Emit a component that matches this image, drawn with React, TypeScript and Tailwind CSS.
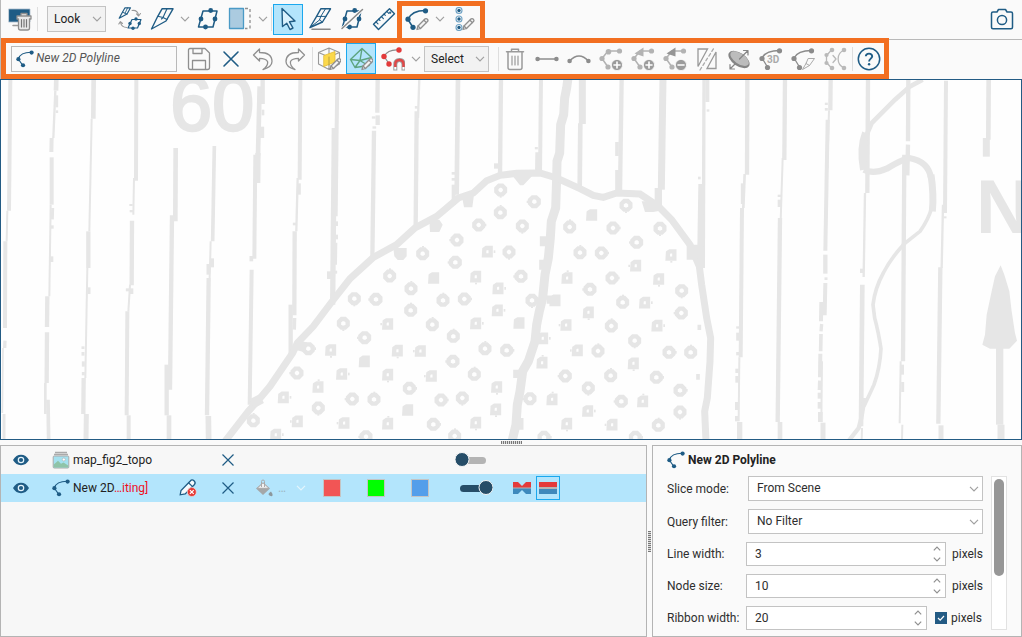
import React from 'react';

type Kids = { children?: React.ReactNode };

const BLUE = '#1f5c85';
const GREY = '#9a9a9a';

function Icon({ children, color = BLUE, size = 24 }: Kids & { color?: string; size?: number }) {
  return (
    <svg width={size} height={size} viewBox="0 0 24 24" fill="none" stroke={color} strokeWidth="1.3" strokeLinejoin="round" strokeLinecap="round" className="shrink-0" aria-hidden="true">
      {children}
    </svg>
  );
}

function Tool({ label, active, children }: Kids & { label: string; active?: boolean }) {
  return (
    <button
      type="button"
      aria-label={label}
      aria-pressed={active}
      className={
        active
          ? 'flex h-[31px] w-[30px] shrink-0 items-center justify-center border border-[#1ba8ee] bg-[#b3e5fc]'
          : 'flex h-[30px] w-[30px] shrink-0 items-center justify-center'
      }
    >
      {children}
    </button>
  );
}

function Chevron({ color = '#a0a0a0' }: { color?: string }) {
  return (
    <svg width="10" height="6" viewBox="0 0 10 6" fill="none" stroke={color} strokeWidth="1.2" aria-hidden="true">
      <path d="M1 .8 5 4.8 9 .8" />
    </svg>
  );
}

function MoreButton({ label }: { label: string }) {
  return (
    <button type="button" aria-label={label} className="flex h-[30px] w-4 shrink-0 items-center justify-center">
      <Chevron />
    </button>
  );
}

function Separator() {
  return <div className="h-6 w-px shrink-0 bg-[#dedede]" />;
}

function Dropdown({ label, value, options, className }: { label: string; value: string; options: string[]; className: string }) {
  return (
    <div className={`relative shrink-0 ${className}`}>
      <select aria-label={label} defaultValue={value} className="h-[26px] w-full appearance-none border border-[#c3c3c3] bg-[#f2f2f2] pl-1.5 text-xs text-[#222]">
        {options.map((o) => (
          <option key={o}>{o}</option>
        ))}
      </select>
      <span className="pointer-events-none absolute inset-y-0 right-1 flex items-center">
        <Chevron />
      </span>
    </div>
  );
}

/* ---------- icon drawings ---------- */

function Pencil({ x = 0, y = 0 }: { x?: number; y?: number }) {
  return (
    <g transform={`translate(${x} ${y})`} stroke="#8f8f8f" strokeWidth="1.3">
      <path d="M1 11.5 2 8 9.2.8Q10.4.2 11.4 1.2T11.7 3.3L4.5 10.5Z" fill="#f4f4f4" />
      <path d="M8 2.2 10.4 4.6M2 8 4.5 10.5" />
    </g>
  );
}

function PolylineShape({ color = BLUE }: { color?: string }) {
  return (
    <g stroke={color}>
      <path d="M20.5 3.5C12 3.5 5.5 6 3 12.5L8 20.5" strokeWidth="1.5" />
      <g fill={color} stroke="none">
        <circle cx="20.5" cy="3.8" r="2.6" />
        <circle cx="3" cy="12.2" r="2.6" />
        <circle cx="8" cy="20.3" r="2.6" />
      </g>
    </g>
  );
}

const PolylineIcon = ({ size = 18 }: { size?: number }) => (
  <Icon size={size}>
    <path d="M20 3C11 3 5 6 3 12L9 20.5" strokeWidth="1.5" />
    <g fill={BLUE} stroke="none">
      <circle cx="20.8" cy="3.4" r="2.8" />
      <circle cx="3.2" cy="12.2" r="2.8" />
      <circle cx="9.4" cy="20.3" r="2.8" />
    </g>
  </Icon>
);

function Plane() {
  return (
    <g>
      <path d="M12 1.8H23L16 14 1.5 22 7.5 9.8Z" strokeWidth="1.4" />
      <path d="M7.8 9.2 13 10.5 17 12.5M17 1.8 13 10.5 11.5 12" strokeWidth="1.1" />
    </g>
  );
}

function NodePlane() {
  return (
    <g>
      <path d="M7 4H21L17 20H2.5Z" strokeWidth="1.5" />
      <g fill={BLUE} stroke="none">
        <circle cx="14.7" cy="3.5" r="2.4" />
        <circle cx="19" cy="12" r="2.4" />
        <circle cx="9.5" cy="20" r="2.4" />
        <circle cx="5" cy="12" r="2.4" />
      </g>
    </g>
  );
}

function HideViewIcon() {
  return (
    <Icon>
      <rect x="1" y="2" width="21" height="13" fill={BLUE} stroke="#abc" strokeWidth=".8" />
      <path d="M5 18.5H10" strokeWidth="1.5" stroke="#999" />
      <path d="M9 9H23V12H21.5V21Q21.5 23 19.5 23H12.5Q10.5 23 10.5 21V12H9ZM13 9V6.5H19V9" fill="#e9e9e9" stroke="#8f8f8f" />
      <path d="M13.5 12.5V20M16 12.5V20M18.5 12.5V20" stroke="#777" strokeWidth="1.2" />
    </Icon>
  );
}

function ConvertIcon() {
  return (
    <Icon>
      <g strokeWidth="1.2">
        <path d="M7 .8H12.5L9 7 1.2 11.2 4.3 5.5Z" />
        <path d="M4.5 5.2 9 7M9.6.8 7 6.2" strokeWidth=".9" />
        <path d="M14 12.5H23L19.5 21H10Z" />
      </g>
      <path d="M14 3.5C17.5 3 20 5 20.6 8.5M18.5 6.8 20.6 9 22.5 6.5M9 20.5C5 20.5 3 18.5 2.4 15M.8 17 2.4 14.6 4.5 16.5" stroke="#999" strokeWidth="1.1" />
      <g fill={BLUE} stroke="none">
        <circle cx="18" cy="12" r="1.7" />
        <circle cx="21.3" cy="16.5" r="1.7" />
        <circle cx="15" cy="21.2" r="1.7" />
        <circle cx="12" cy="16.5" r="1.7" />
      </g>
    </Icon>
  );
}

function TrashIcon() {
  return (
    <Icon color={GREY}>
      <path d="M3.5 4.8H20.5M8.5 4.5V2.2H15.5V4.5M5 5.2V20.5Q5 22.5 7 22.5H17Q19 22.5 19 20.5V5.2" strokeWidth="1.5" />
      <path d="M9 9V18M12 9V18M15 9V18" strokeWidth="1.2" />
    </Icon>
  );
}

function NodeChain({ badge, arrow }: { badge: '+' | '-'; arrow?: boolean }) {
  return (
    <Icon color="#b3b3b3">
      <path d="M20 4H9L3 11.5 9 20" strokeWidth="1.5" />
      <g fill="#b3b3b3" stroke="none">
        <circle cx="20.5" cy="4" r="2.6" />
        <circle cx="3" cy="11.5" r="2.6" />
        <circle cx="9" cy="20" r="2.6" />
        {arrow ? <path d="M3.5 6.5 12.5.5V9.5Z" fill={badge === '-' ? '#959595' : '#b3b3b3'} /> : <circle cx="9.5" cy="4.8" r="2.8" />}
      </g>
      <circle cx="18" cy="18" r="5.6" fill="#9b9b9b" stroke="#fafafa" strokeWidth=".8" />
      <path d={badge === '+' ? 'M15 18H21M18 15V21' : 'M15 18H21'} stroke="#fff" strokeWidth="1.6" />
    </Icon>
  );
}

/* ---------- toolbars ---------- */

function MainToolbar() {
  return (
    <header className="flex h-[38px] items-center border-l border-[#b9b9b9] pr-[5px]">
      <div className="flex h-full items-center pl-1">
        <Tool label="Clear view"><HideViewIcon /></Tool>
        <div className="ml-[2px] mr-[9px]"><Separator /></div>
        <Dropdown label="Look" value="Look" options={['Look', 'Front', 'Top']} className="mr-[9px] w-[59px]" />
        <Tool label="Convert plane"><ConvertIcon /></Tool>
        <div className="w-0.5" />
        <Tool label="Draw slicer line"><Icon><Plane /></Icon></Tool>
        <MoreButton label="Slicer options" />
        <Tool label="Moving plane"><Icon><NodePlane /></Icon></Tool>
        <div className="w-0.5" />
        <Tool label="Clip scene">
          <Icon>
            <rect x="1.5" y="1.5" width="14" height="20" fill="#abcbe0" stroke="#4b9ac6" />
            <path d="M17 1.5H22V21.5H17" stroke="#8f8f8f" strokeDasharray="3 2.5" strokeLinecap="butt" />
          </Icon>
        </Tool>
        <MoreButton label="Clip options" />
        <Separator />
        <div className="ml-px flex items-center gap-0.5">
          <Tool label="Select" active>
            <Icon>
              <path d="M6 1.5 19 14 13.5 14.8 17 21 14 22.5 10.8 16.2 6.5 19.5Z" strokeWidth="1.4" fill="#d9f1fc" />
            </Icon>
          </Tool>
          <Tool label="Draw slice">
            <Icon>
              <path d="M12.8 1.8H22.5L14.5 15 2 20.5 8.3 9.8Z" strokeWidth="1.4" />
              <path d="M8.6 9.4H18M12.8 9.4 11.5 13 14.5 15M17.5 1.8 12.8 9.4M11.5 13 2 20.5" strokeWidth="1" />
              <path d="M4 22.3H22" stroke="#888" strokeWidth="1.6" />
            </Icon>
          </Tool>
          <Tool label="Remove plane">
            <Icon>
              <NodePlane />
              <path d="M2 22 23 2" stroke="#fafafa" strokeWidth="3.5" />
              <path d="M2 21.5 22.5 2.5" stroke="#888" strokeWidth="1.5" />
            </Icon>
          </Tool>
          <Tool label="Ruler">
            <Icon>
              <path d="M17.5 1.8 22.5 6.8 6.5 22.5 1.5 17.2Z" strokeWidth="1.4" />
              <path d="M4 14.8 6 16.8M6.7 12.2 8 13.5M9.4 9.6 11.4 11.6M12 7 13.3 8.3M14.8 4.3 16.8 6.3" strokeWidth="1.1" />
              <circle cx="18.2" cy="5.7" r=".5" />
            </Icon>
          </Tool>
        </div>
      </div>
      <div className="-ml-0.5 mt-px flex h-[37px] w-[88px] shrink-0 items-center justify-between self-start border-x-[5px] border-t-[5px] border-[#f26f21] pb-1.5">
        <div className="flex items-center">
          <Tool label="New polyline"><Icon><PolylineShape /><Pencil x={11} y={11} /></Icon></Tool>
          <MoreButton label="Polyline options" />
        </div>
        <Tool label="New points">
          <Icon>
            {[3.5, 12, 20.5].map((y) => (
              <g key={y}>
                <circle cx="6" cy={y} r="3" stroke="#6fa3c5" strokeWidth="1.1" />
                <circle cx="6" cy={y} r="1.7" fill={BLUE} stroke="none" />
              </g>
            ))}
            <Pencil x={9} y={11} />
          </Icon>
        </Tool>
      </div>
      <div className="ml-auto">
        <Tool label="Take snapshot">
          <Icon>
            <path d="M3 5H7L8.5 2.5H15.5L17 5H21Q22.5 5 22.5 6.5V20.2Q22.5 21.7 21 21.7H3Q1.5 21.7 1.5 20.2V6.5Q1.5 5 3 5Z" strokeWidth="1.5" />
            <circle cx="12" cy="13" r="4.6" strokeWidth="1.5" />
          </Icon>
        </Tool>
      </div>
    </header>
  );
}

function EditToolbar() {
  return (
    <div className="flex h-[41px] border-l border-[#b9b9b9]">
      <div className="flex shrink-0 items-center border-[5px] border-[#f26f21] pl-[5px]">
        <label className="mr-[7px] flex h-[26px] w-[166px] items-center gap-0.5 border border-[#b9b9b9] pl-1">
          <PolylineIcon />
          <input aria-label="Name" defaultValue="New 2D Polyline" className="w-full min-w-0 bg-transparent pb-0.5 text-xs italic text-[#555] outline-none" />
        </label>
        <div className="flex items-center gap-0.5">
          <Tool label="Save">
            <Icon color="#8f8f8f">
              <path d="M3 1.5H18L22.5 6V20.5Q22.5 22.5 20.5 22.5H3.5Q1.5 22.5 1.5 20.5V3Q1.5 1.5 3 1.5Z" />
              <path d="M6 1.8V6.5H15V1.8M5.5 22.3V13.5H18.5V22.3" />
            </Icon>
          </Tool>
          <Tool label="Close"><Icon><path d="M5 5 19 19M19 5 5 19" strokeWidth="1.6" /></Icon></Tool>
          <Tool label="Undo">
            <Icon color="#8f8f8f"><path d="M2.5 8 8.5 2V5.5C17 5.5 21 9 21 14.5Q21 20 12 22.5Q17.5 18.5 16.5 14.5Q15 11.3 8.5 11.3V14Z" /></Icon>
          </Tool>
          <Tool label="Redo">
            <Icon color="#8f8f8f"><path d="M21.5 8 15.5 2V5.5C7 5.5 3 9 3 14.5Q3 20 12 22.5Q6.5 18.5 7.5 14.5Q9 11.3 15.5 11.3V14Z" /></Icon>
          </Tool>
        </div>
        <div className="ml-0.5 mr-px"><Separator /></div>
        <Tool label="Draw on scene">
          <Icon color="#999">
            <path d="M12 1 22.5 5.5V17L12 22.5 1.5 17V5.5ZM1.5 5.5 12 10 22.5 5.5M12 10V22.5M12 1V10" strokeWidth="1.1" />
            <path d="M7 8.5 18 4.5V15L7 19.5Z" fill="#fbd84b" stroke="#e3bb35" strokeWidth=".8" />
            <path d="M12 10V18" stroke="#b79f3f" strokeWidth="1" />
            <Pencil x={12} y={11} />
          </Icon>
        </Tool>
        <div className="w-0.5" />
        <Tool label="Draw on plane" active>
          <Icon color="#5da47f">
            <path d="M13 1.5 22.5 10.5 20 18.5 6 20.5 1.5 12.5ZM13 1.5 11 13.5 1.5 12.5M11 13.5 22.5 10.5M11 13.5 6 20.5M11 13.5 19 18.5" strokeWidth="1.4" />
            <Pencil x={12} y={11} />
          </Icon>
        </Tool>
        <div className="w-0.5" />
        <Tool label="Snap">
          <Icon color="#8a8a8a">
            <path d="M18 3C12 2.5 6 4 3 9.5L8 16.5" strokeWidth="1.2" />
            <g fill="#e33a3a" stroke="none">
              <circle cx="18" cy="3" r="2.7" />
              <circle cx="3" cy="9.5" r="2.7" />
              <circle cx="8" cy="17" r="2.7" />
            </g>
            <path d="M14.3 23.5V17.5Q14.3 13 18.4 13T22.5 17.5V23.5" stroke="#9d9d9d" strokeWidth="4" strokeLinecap="butt" />
            <path d="M14.3 20V17.5Q14.3 13 18.4 13T22.5 17.5V20" stroke="#e04848" strokeWidth="2.4" strokeLinecap="butt" />
            <path d="M14.3 20V22.5M22.5 20V22.5" stroke="#fff" strokeWidth="2" strokeLinecap="butt" />
          </Icon>
        </Tool>
        <MoreButton label="Snap options" />
        <Dropdown label="Snap mode" value="Select" options={['Select', 'Draw']} className="w-[65px]" />
        <div className="ml-[9px] mr-px"><Separator /></div>
        <div className="flex items-center gap-0.5">
          <Tool label="Delete"><TrashIcon /></Tool>
          <Tool label="Straight segment">
            <Icon color="#8d8d8d">
              <path d="M2.5 12H21.5" strokeWidth="1.6" />
              <g fill="#8d8d8d" stroke="none"><circle cx="2.6" cy="12" r="2.3" /><circle cx="21.4" cy="12" r="2.3" /></g>
            </Icon>
          </Tool>
          <Tool label="Curved segment">
            <Icon color="#8d8d8d">
              <path d="M2.5 14Q12 4 21.5 14" strokeWidth="1.6" />
              <g fill="#8d8d8d" stroke="none"><circle cx="2.6" cy="14" r="2.3" /><circle cx="21.4" cy="14" r="2.3" /></g>
            </Icon>
          </Tool>
          <Tool label="Add node"><NodeChain badge="+" /></Tool>
          <Tool label="Extend"><NodeChain badge="+" arrow /></Tool>
          <Tool label="Remove node"><NodeChain badge="-" arrow /></Tool>
          <Tool label="Mirror">
            <Icon color="#999">
              <path d="M3 2H12.5L3 19.5ZM12 21.5 21 5V21.5Z" strokeLinejoin="miter" />
              <path d="M5 23 19 1" strokeDasharray="3 2.5" stroke="#aaa" />
            </Icon>
          </Tool>
          <Tool label="Fit disk">
            <Icon color="#858585">
              <ellipse cx="12" cy="12.5" rx="12" ry="6.6" transform="rotate(34 12 12.5)" fill="#858585" stroke="none" />
              <ellipse cx="12.6" cy="11.6" rx="10.5" ry="5.2" transform="rotate(34 12.6 11.6)" fill="#bcbcbc" stroke="none" />
              <path d="M12.5 12 20.5 4M16.5 3.5H21V8M7.5 17.5 3.5 21.5M3 17.5V22H7.5" strokeWidth="1.2" />
            </Icon>
          </Tool>
          <Tool label="Convert to 3D">
            <Icon color="#8b8b8b">
              <path d="M20.5 3.5C12 3.5 5.5 6 3 11L8.5 20" />
              <g fill="#8b8b8b" stroke="none"><circle cx="20.5" cy="3.8" r="2.6" /><circle cx="3" cy="11.5" r="2.6" /><circle cx="8.5" cy="20.5" r="2.6" /></g>
              <text x="8" y="16" fill="#aaa" stroke="none" fontFamily="Roboto, sans-serif" fontWeight="700" fontSize="10">3D</text>
            </Icon>
          </Tool>
          <Tool label="Slice from polyline">
            <Icon color="#8b8b8b">
              <path d="M20.5 3.5C12 3.5 5.5 6 3 11L8.5 20" />
              <g fill="#8b8b8b" stroke="none"><circle cx="20.5" cy="3.8" r="2.6" /><circle cx="3" cy="11.5" r="2.6" /><circle cx="8.5" cy="20.5" r="2.6" /></g>
              <path d="M17.5 11.5H23.5L18.5 18.5 11.5 22.5 15 16.5ZM15 16.5 18.5 18.5" strokeWidth="1" stroke="#aaa" />
            </Icon>
          </Tool>
          <Tool label="Join">
            <Icon color="#b9b9b9">
              <path d="M8.5 3 3.5 8.5V15.5L8.5 21M21.5 3C13 6 13 18 21.5 21M10 8.5 13 12 10 15.5" />
              <g fill="#b9b9b9" stroke="none"><circle cx="9" cy="3" r="2.3" /><circle cx="3.5" cy="8" r="2.1" /><circle cx="3.5" cy="16" r="2.1" /><circle cx="9" cy="21" r="2.3" /><circle cx="21" cy="3" r="2.3" /><circle cx="21" cy="21" r="2.3" /></g>
            </Icon>
          </Tool>
        </div>
        <div className="ml-0.5 mr-px"><Separator /></div>
        <Tool label="Help">
          <Icon>
            <circle cx="12" cy="12" r="10.7" strokeWidth="1.5" />
            <path d="M8.8 9.3Q9 6.6 12 6.6T15.2 9.3C15.2 11.5 12.1 11.8 12.1 14.4" strokeWidth="1.9" strokeLinecap="butt" />
            <circle cx="12.1" cy="17.2" r="1.2" fill={BLUE} stroke="none" />
          </Icon>
        </Tool>
      </div>
      <div className="mt-px flex-1 border-t border-[#b9b9b9]" />
    </div>
  );
}

/* ---------- map ---------- */

/* Contour strokes: x1, y1, x2, y2, width */
type Seg = [number, number, number, number, number];

const WEST: Seg[] = [
  [31, 0, 27, 398, 12], [22, 398, 20, 490, 6], [16, 490, 15, 750, 12], [15, 788, 14, 810, 10], [9, 810, 7, 1005, 5], [12, 1008, 12, 1090, 9],
  [169, 0, 168, 38, 14], [166, 38, 160, 180, 7], [171, 52, 171, 88, 7], [171, 97, 171, 105, 7], [155, 180, 154, 222, 12], [155, 238, 155, 380, 12], [152, 380, 148, 655, 6], [158, 390, 157, 424, 9], [157, 442, 157, 452, 8], [155, 535, 155, 552, 10], [142, 655, 141, 747, 13], [141, 763, 140, 915, 13], [136, 915, 136, 1008, 8], [144, 965, 146, 1090, 11],
  [281, 0, 280, 122, 14], [275, 122, 268, 460, 6], [265, 460, 265, 570, 13], [262, 570, 256, 900, 6], [267, 628, 267, 648, 9], [249, 805, 249, 813, 9], [249, 822, 249, 833, 9], [250, 850, 250, 866, 9], [250, 882, 250, 892, 9], [251, 900, 250, 1008, 13], [259, 1008, 258, 1090, 15],
  [409, 0, 408, 308, 12], [402, 300, 400, 410, 6], [393, 378, 393, 384, 10], [394, 396, 394, 403, 10], [396, 428, 395, 622, 13], [390, 620, 385, 700, 6], [383, 631, 383, 640, 11], [395, 631, 395, 648, 10], [382, 700, 380, 1012, 12], [386, 1012, 386, 1090, 12],
  [527, 210, 526, 430, 14], [516, 412, 510, 935, 13], [500, 860, 500, 1012, 13], [507, 1012, 507, 1090, 14],
  [643, 204, 638, 490, 11], [632, 490, 629, 600, 6], [637, 541, 637, 568, 10], [625, 558, 625, 590, 11], [626, 600, 621, 1012, 13], [625, 1014, 626, 1090, 17],
  [788, 0, 788, 78, 13], [779, 25, 774, 232, 14], [789, 95, 789, 112, 8], [786, 146, 786, 180, 13], [774, 225, 773, 315, 16], [766, 230, 763, 542, 12], [754, 534, 754, 550, 11], [755, 575, 749, 980, 12],
  [901, 0, 899, 305, 12], [898, 316, 898, 350, 9], [893, 300, 889, 460, 7], [884, 434, 884, 442, 11], [884, 460, 883, 712, 13], [872, 680, 872, 830, 13], [884, 720, 883, 755, 10],
  [1012, 0, 1010, 150, 12], [1003, 150, 998, 680, 16], [1009, 150, 1006, 415, 14], [1008, 430, 1008, 444, 12], [1008, 470, 1008, 484, 12], [1006, 494, 1005, 560, 12], [987, 580, 987, 603, 12], [1007, 578, 1007, 587, 9],
];

const CENTRE: Seg[] = [
  [143, 0, 142, 104, 13], [143, 112, 143, 141, 13], [131, 115, 131, 122, 11], [133, 145, 133, 152, 11], [132, 158, 127, 545, 13], [268, 0, 264, 120, 7], [259, 84, 259, 92, 9], [260, 100, 257, 445, 13],
  [384, 0, 380, 350, 14], [370, 282, 370, 290, 10], [370, 300, 370, 308, 10], [371, 320, 371, 380, 12], [513, 0, 510, 300, 13], [498, 256, 498, 272, 12],
  [633, 0, 630, 290, 12], [619, 207, 619, 214, 9], [622, 223, 621, 290, 12], [757, 0, 757, 138, 21], [751, 136, 749, 335, 14],
  [875, 0, 870, 345, 13], [861, 192, 861, 234, 11], [862, 276, 862, 345, 13], [999, 0, 994, 335, 21], [985, 330, 985, 390, 22],
];

const EAST: Seg[] = [
  [112, 0, 112, 72, 12], [102, 0, 100, 570, 10], [114, 94, 114, 101, 8], [88, 296, 88, 304, 8], [94, 318, 90, 572, 18],
  [232, 0, 231, 290, 13], [224, 288, 220, 390, 8], [217, 316, 217, 378, 9], [216, 390, 212, 838, 12], [203, 745, 203, 752, 9], [203, 764, 203, 788, 9], [203, 822, 203, 832, 9], [208, 838, 206, 1030, 6], [201, 872, 201, 885, 10], [201, 894, 201, 914, 10], [200, 972, 200, 996, 10], [200, 1014, 200, 1030, 10], [209, 1032, 209, 1090, 16],
  [345, 0, 343, 246, 13], [338, 240, 332, 430, 6], [328, 350, 328, 357, 10], [328, 365, 328, 387, 10], [330, 420, 323, 1032, 13], [330, 1032, 330, 1090, 14],
  [482, 0, 481, 97, 13], [477, 97, 472, 270, 6], [469, 74, 469, 81, 9], [469, 90, 469, 98, 9], [473, 125, 466, 518, 12], [466, 530, 466, 587, 13], [468, 598, 468, 606, 9], [466, 615, 464, 712, 12], [454, 672, 453, 730, 12], [455, 738, 453, 760, 10], [453, 768, 452, 820, 11], [451, 827, 450, 898, 12], [449, 908, 448, 936, 10], [449, 944, 449, 962, 12], [449, 972, 449, 992, 12], [456, 850, 454, 1032, 6], [451, 1002, 451, 1032, 14], [459, 1034, 459, 1090, 15],
  [594, 0, 592, 345, 13], [585, 345, 581, 597, 7], [575, 572, 575, 585, 10], [577, 620, 573, 1045, 14], [576, 1050, 575, 1090, 6],
  [715, 0, 714, 190, 13], [714, 200, 712, 292, 13], [703, 230, 699, 850, 13], [697, 860, 697, 890, 10], [698, 912, 698, 942, 9], [692, 850, 689, 1036, 6], [697, 1040, 696, 1090, 6],
  [828, 8, 825, 405, 12], [819, 380, 815, 570, 7], [825, 415, 825, 421, 9], [811, 568, 805, 1037, 13], [813, 1042, 813, 1090, 15],
  [956, 0, 955, 185, 14], [949, 180, 949, 236, 21],
  [989, 800, 989, 1040, 22], [993, 1040, 993, 1090, 21],
];

/* Vegetation marks; the third value chooses the form: 0 ring, 1 box, 2 filled */
const MARKS: [number, number, number][] = [
  [-65, 812, 0], [3, 816, 1], [-99, 885, 0], [-35, 927, 1], [-139, 958, 1], [-35, 990, 0], [-97, 1030, 1], [-230, 1028, 0], [-162, 1070, 1],
  [512, 336, 0], [613, 371, 0], [511, 404, 0], [446, 441, 0], [577, 444, 0], [381, 486, 0], [278, 527, 0], [473, 521, 1], [537, 522, 0], [376, 553, 0], [179, 594, 0], [312, 600, 2], [438, 596, 1], [573, 595, 0], [243, 632, 0], [505, 631, 1],
  [73, 662, 0], [138, 664, 0], [339, 667, 0], [403, 663, 0], [606, 667, 0], [676, 667, 2], [242, 697, 0], [503, 697, 1], [40, 736, 0], [174, 738, 1], [307, 740, 0], [438, 736, 1], [568, 735, 2], [104, 779, 0], [370, 775, 0], [639, 781, 1],
  [203, 818, 1], [272, 819, 1], [465, 812, 0], [530, 817, 0], [104, 850, 2], [369, 850, 0], [637, 854, 1], [36, 888, 1], [174, 890, 1], [305, 894, 1], [433, 889, 0], [238, 931, 0], [501, 927, 1], [67, 963, 0], [132, 964, 0], [333, 966, 0], [397, 960, 0], [600, 962, 0], [667, 964, 1],
  [234, 996, 2], [498, 994, 1], [43, 1035, 1], [174, 1037, 1], [310, 1039, 0], [438, 1034, 1], [108, 1076, 0], [374, 1074, 0], [642, 1078, 0],
  [888, 382, 0], [786, 411, 2], [719, 447, 0], [849, 450, 0], [990, 451, 0], [920, 493, 0], [750, 524, 0], [814, 525, 0], [1024, 531, 1], [918, 563, 1], [712, 600, 1], [846, 600, 0], [987, 603, 1], [780, 634, 0], [878, 673, 0], [945, 674, 1], [776, 703, 1],
  [709, 741, 1], [844, 744, 0], [982, 743, 1], [914, 788, 0], [743, 817, 1], [804, 819, 0], [1017, 823, 0], [911, 856, 1], [706, 894, 0], [842, 893, 0], [979, 898, 0], [775, 930, 0], [874, 970, 0], [939, 970, 1], [774, 999, 1], [711, 1037, 1], [847, 1040, 1], [985, 1042, 0], [916, 1078, 0],
  [1055, 638, 0], [1054, 705, 0], [1082, 823, 0], [1050, 937, 0], [1050, 1002, 0],
];

function Segments({ items }: { items: Seg[] }) {
  return (
    <>
      {items.map(([x1, y1, x2, y2, w], i) => (
        <line key={i} x1={x1} y1={y1} x2={x2} y2={y2} strokeWidth={w} />
      ))}
    </>
  );
}

/* Small spur that gives each mark an uneven, hand-inked edge */
const SPURS = ['m18-4h5v8h-5z', 'm-3 18h6v5h-6z', 'm-23-3h5v7h-5z', 'm-2-23h6v5h-6z'];

function Mark({ x, y, kind, spur }: { x: number; y: number; kind: number; spur: string }) {
  return (
    <>
      {kind === 0 ? (
        <path d={`M${x - 5} ${y - 13}h10l8 8v10l-8 8h-10l-8-8v-10z`} />
      ) : (
        <path d={`M${x - 10} ${y - 7}l6-4h13v22h-20z`} fill={kind === 2 ? '#e6e6e6' : 'none'} />
      )}
      {kind !== 2 && <path d={`M${x} ${y}${spur}`} fill="#e6e6e6" stroke="none" />}
    </>
  );
}

function MapView() {
  return (
    <main className="flex min-h-[200px] flex-1 border border-[#235b84] bg-[#fefefe]">
      <svg viewBox="1 80 1020 359" preserveAspectRatio="xMidYMid slice" className="h-full min-h-0 w-full flex-1" role="img" aria-label="Topographic map">
        <g stroke="#e6e6e6" fill="none" strokeLinejoin="miter">
          <g transform="translate(0 78) scale(.33333)">
            <Segments items={WEST} />
            <text x="511" y="157" fontFamily="Liberation Sans, Arial, sans-serif" fontSize="226" fill="#e6e6e6" strokeWidth="7">60</text>
          </g>
          <g transform="translate(330 78) scale(.33333)">
            <Segments items={CENTRE} />
            <path d="M714 0 710 30 704 60 701 110 692 140 689 225 681 250 680 300 677 390 664 430 661 480 655 540 645 590 638 660 628 700 620 740 615 790 595 850 578 880 570 940 562 980 558 1040 546 1090" strokeWidth="27" />
            <path d="M642 475V505M640 545V575M650 665H690M562 875V900M568 1020V1055" strokeWidth="25" />
            <path d="M-315 1090-245 1000-205 955-180 925-112 825-98 795-50 745 5 672 60 602 130 538 200 500 255 450 320 415 385 360 430 345 470 308 510 292 560 286 630 285 680 300 750 332 790 352 820 358 860 345 930 348 985 385 1025 425 1080 500 1108 565 1115 620 1130 720 1142 780 1140 850 1132 960 1124 1000 1128 1090" strokeWidth="21" />
            <path d="M-236 978-205 962M-105 800-72 808" strokeWidth="30" />
            <path d="M190 510H230V535L220 546H203L193 535ZM298 425H328L338 440 328 462H300ZM395 350H432L427 388H402ZM545 290H610L580 322H570ZM935 370H990V398L970 402H945ZM1070 500H1105V545H1070Z" fill="#e6e6e6" stroke="none" />
            <g strokeWidth="13">
              {MARKS.map(([x, y, k], i) => (
                <Mark key={i} x={x} y={y} kind={k} spur={SPURS[i % 4]} />
              ))}
            </g>
          </g>
          <g transform="translate(670 78) scale(.33333)">
            <Segments items={EAST} />
            <path d="M758 5 720 25 675 65 605 135 588 175" strokeWidth="14" />
            <path d="M588 165Q570 210 582 275" strokeWidth="24" />
            <path d="M582 275Q610 290 650 272 695 245 718 240 775 250 783 300" strokeWidth="19" />
            <path d="M783 290Q792 350 787 400" strokeWidth="21" />
            <path d="M785 390Q775 425 750 460L700 500Q660 545 640 585 615 630 609 680L614 720Q625 760 633 812 630 870 612 920L582 985" strokeWidth="11" />
            <path d="M584 960 574 1020 566 1050 535 1090" strokeWidth="13" />
            <text x="918" y="466" fontFamily="Liberation Sans, Arial, sans-serif" fontSize="226" fontWeight="700" fill="#e6e6e6" stroke="none">N</text>
            <path d="M992 562 1003 590 1018 640 1025 700 1035 765 1041 788 1018 812H960L937 800 945 770 950 710 965 640 975 595Z" fill="#e6e6e6" stroke="none" />
            <path d="M88 740V756M84 888V905" strokeWidth="11" />
          </g>
        </g>
      </svg>
    </main>
  );
}

/* ---------- shape list ---------- */

const EyeIcon = () => (
  <svg width="16" height="12" viewBox="0 0 16 12" aria-hidden="true">
    <path d="M0 6Q3 .8 8 .8T16 6Q13 11.2 8 11.2T0 6Z" fill={BLUE} />
    <circle cx="8" cy="6" r="3.3" fill="#e6f4fb" />
    <circle cx="8" cy="6" r="2.1" fill={BLUE} />
  </svg>
);

const CrossIcon = () => (
  <svg width="14" height="14" viewBox="0 0 14 14" stroke={BLUE} strokeWidth="1.2" aria-hidden="true">
    <path d="M1.5 1.5 12.5 12.5M12.5 1.5 1.5 12.5" />
  </svg>
);

const ImageIcon = () => (
  <svg width="18" height="18" viewBox="0 0 18 18" aria-hidden="true">
    <path d="M3 1.5H15M2 3.5H16" stroke="#aaa" strokeWidth="1.5" />
    <rect x="1.2" y="5" width="15.6" height="12" rx="1" fill="#a5e1ef" stroke="#aaa" />
    <path d="M1.8 13.5 6 9.8 9 12.8 11.5 11.5 16.2 14.5V16.5H1.8Z" fill="#8fc4a8" />
    <circle cx="11.8" cy="8.5" r="1.5" fill="#fff" stroke="#aaa" strokeWidth=".6" />
  </svg>
);

function Eye({ name }: { name: string }) {
  return (
    <button type="button" aria-label={`Show ${name}`} className="mx-auto block h-3 w-4"><EyeIcon /></button>
  );
}

function Slider({ name, on }: { name: string; on?: boolean }) {
  return (
    <button type="button" role="switch" aria-checked={!!on} aria-label={`Opacity of ${name}`} className={on ? 'ml-[17px] block h-4 w-[34px]' : 'ml-[13px] block h-4 w-[34px]'}>
      <svg width="34" height="16" viewBox="0 0 34 16" aria-hidden="true">
        <rect x={on ? 1 : 5} y="5" width="26" height="7" rx="3.5" fill={on ? '#264d68' : '#b4b4b4'} />
        <circle cx={on ? 27 : 7} cy="7.5" r="7" fill="#264d68" stroke="#f4f4f4" strokeWidth="1" />
      </svg>
    </button>
  );
}

function Swatch({ name, className }: { name: string; className: string }) {
  return <button type="button" aria-label={name} className={`mx-auto block size-[18px] border border-[#c4c4c4] ${className}`} />;
}

function ShapeList() {
  return (
    <section aria-label="Shape list" className="min-w-0 border border-[#b4b4b4] bg-[#f7f7f7]">
      <table className="w-full table-fixed text-xs text-[#222]">
        <colgroup>
          <col className="w-10" />
          <col className="w-[131px]" />
          <col className="w-8" />
          <col className="w-12" />
          <col className="w-[58px]" />
          <col className="w-11" />
          <col className="w-11" />
          <col className="w-11" />
          <col className="w-[68px]" />
          <col />
        </colgroup>
        <tbody>
          <tr className="h-7">
            <td><Eye name="map_fig2_topo" /></td>
            <td>
              <div className="flex items-center gap-[3px] pl-[11px]"><ImageIcon /><span>map_fig2_topo</span></div>
            </td>
            <td />
            <td><button type="button" aria-label="Remove map_fig2_topo" className="mx-auto block"><CrossIcon /></button></td>
            <td />
            <td />
            <td />
            <td />
            <td><Slider name="map_fig2_topo" /></td>
            <td />
          </tr>
          <tr className="h-7 bg-[#b3e5fc]">
            <td><Eye name="New 2D Polyline" /></td>
            <td>
              <div className="flex items-center gap-[3px] pl-[11px]">
                <PolylineIcon />
                <span>New 2D<span className="text-[#f0101f]">…iting]</span></span>
              </div>
            </td>
            <td>
              <button type="button" aria-label="Stop editing" className="mx-auto block">
                <svg width="18" height="18" viewBox="0 0 18 18" aria-hidden="true">
                  <path d="M1.2 15.8 2 11.5 11.3 2Q13-.1 15 1.8T15.5 5.5L6.2 15Z" fill="#f6fbfe" stroke={BLUE} strokeWidth="1.3" />
                  <path d="M9.5 3.8 13.5 7.6" stroke={BLUE} strokeWidth="1.2" />
                  <circle cx="12.8" cy="13" r="4.5" fill="#e53935" stroke="#f4dfe0" strokeWidth=".7" />
                  <path d="M10.9 11.1 14.7 14.9M14.7 11.1 10.9 14.9" stroke="#fff" strokeWidth="1.2" />
                </svg>
              </button>
            </td>
            <td><button type="button" aria-label="Remove New 2D Polyline" className="mx-auto block"><CrossIcon /></button></td>
            <td>
              <button type="button" aria-label="Colouring" className="flex items-center gap-1 pl-1 text-[#9db6c2]">
                <svg width="18" height="18" viewBox="0 0 18 18" aria-hidden="true">
                  <path d="M7 3.5 14 9.5 7 16 0 9.5Z" fill="#a4a7a8" />
                  <path d="M7 3.8 13 9.3H1.2Z" fill="#f2f2f2" stroke="#aaa" strokeWidth="1" />
                  <path d="M5.5 8V2.5Q5.5 1 7 1T8.5 2.5V8" fill="none" stroke="#aaa" />
                  <path d="M15 12.5Q17 15 16.5 16.5T13.5 16.5 15 12.5Z" fill="#8c979c" />
                </svg>
                <span>…</span>
                <span className="ml-1.5 shrink-0"><Chevron color="#e4f5fc" /></span>
              </button>
            </td>
            <td><Swatch name="Line colour" className="bg-[#f25555]" /></td>
            <td><Swatch name="Forward ribbon colour" className="bg-[#00ff00]" /></td>
            <td><Swatch name="Back ribbon colour" className="bg-[#539eea]" /></td>
            <td><Slider name="New 2D Polyline" on /></td>
            <td>
              <div className="flex items-center gap-0.5">
                <button type="button" aria-label="Show line" className="flex size-6 items-center justify-center">
                  <svg width="18" height="12" viewBox="0 0 18 12" aria-hidden="true">
                    <path d="M0 0H5L9 4 13 0H18V6H0Z" fill="#e43a3a" />
                    <path d="M0 6H18V12H13L9 8 5 12H0Z" fill="#3e89bc" />
                    <path d="M0 6H18" stroke="#b6b6b6" />
                  </svg>
                </button>
                <button type="button" aria-label="Show ribbon" aria-pressed="true" className="flex size-6 items-center justify-center border border-[#1ba8ee]">
                  <svg width="18" height="12" viewBox="0 0 18 12" aria-hidden="true">
                    <path d="M0 0H18V5H0Z" fill="#e43a3a" />
                    <path d="M0 7H18V12H0Z" fill="#3e89bc" />
                    <path d="M0 6H18" stroke="#b6b6b6" strokeWidth="2" />
                  </svg>
                </button>
              </div>
            </td>
          </tr>
        </tbody>
      </table>
    </section>
  );
}

/* ---------- properties ---------- */

function SelectRow({ id, label, value }: { id: string; label: string; value: string }) {
  return (
    <div className="flex h-[25px] items-center">
      <label htmlFor={id} className="w-[81px] shrink-0">{label}</label>
      <div className="relative flex-1">
        <select id={id} defaultValue={value} className="block h-[25px] w-full appearance-none border border-[#c3c3c3] bg-white pb-0.5 pl-2 text-xs">
          <option>{value}</option>
        </select>
        <span className="pointer-events-none absolute inset-y-0 right-1 flex items-center"><Chevron /></span>
      </div>
    </div>
  );
}

function NumberRow({ id, label, value, unit }: { id: string; label: string; value: number; unit: React.ReactNode }) {
  return (
    <div className="flex h-6 items-center">
      <label htmlFor={id} className="w-[79px] shrink-0">{label}</label>
      <div className="flex h-6 min-w-0 flex-1 border border-[#c3c3c3] bg-white">
        <input
          id={id}
          type="number"
          defaultValue={value}
          className="w-full min-w-0 pl-2 text-xs outline-none [appearance:textfield] [&::-webkit-inner-spin-button]:appearance-none [&::-webkit-outer-spin-button]:appearance-none"
        />
        <div className="flex w-4 shrink-0 flex-col items-center justify-center gap-1">
          <button type="button" aria-label={`Increase ${label}`} className="block h-1.5 rotate-180"><svg width="8" height="5" viewBox="0 0 8 5" className="block" fill="none" stroke="#8f8f8f" strokeWidth="1.2"><path d="M.8.6 4 3.8 7.2.6" /></svg></button>
          <button type="button" aria-label={`Decrease ${label}`} className="block h-1.5"><svg width="8" height="5" viewBox="0 0 8 5" className="block" fill="none" stroke="#8f8f8f" strokeWidth="1.2"><path d="M.8.6 4 3.8 7.2.6" /></svg></button>
        </div>
      </div>
      {unit}
    </div>
  );
}

function Properties() {
  const pixels = <span className="w-[37px] shrink-0 pl-1.5">pixels</span>;
  return (
    <section aria-label="Properties" className="min-w-0 border border-[#b4b4b4] bg-[#fafafa] px-3.5 pb-[5px] text-xs text-[#2e2e2e]">
      <h2 className="flex h-[30px] items-center gap-[3px] pb-0.5 font-bold text-[#222]">
        <PolylineIcon />
        New 2D Polyline
      </h2>
      <div className="flex gap-2">
        <div className="flex min-w-0 flex-1 flex-col gap-2">
          <SelectRow id="slice" label="Slice mode:" value="From Scene" />
          <SelectRow id="query" label="Query filter:" value="No Filter" />
          <NumberRow id="line" label="Line width:" value={3} unit={pixels} />
          <NumberRow id="node" label="Node size:" value={10} unit={pixels} />
          <NumberRow
            id="ribbon"
            label="Ribbon width:"
            value={20}
            unit={
              <label className="flex w-14 shrink-0 items-center gap-1 pl-2">
                <span className="relative flex size-3">
                  <input type="checkbox" defaultChecked className="size-3 appearance-none bg-[#235b84]" />
                  <svg width="12" height="12" viewBox="0 0 12 12" className="pointer-events-none absolute inset-0" fill="none" stroke="#fff" strokeWidth="1.2" aria-hidden="true">
                    <path d="M3 6 5.2 8.2 9 4" />
                  </svg>
                </span>
                pixels
              </label>
            }
          />
        </div>
        <div className="w-4 shrink-0 border border-[#e2e2e2] bg-white px-0.5 pt-0.5">
          <div className="h-[97px] w-[10px] rounded-full bg-[#979797]" />
        </div>
      </div>
    </section>
  );
}

export default function App() {
  return (
    <div className="flex min-h-screen flex-col bg-[#fafafa] font-['Roboto',sans-serif]">
      <MainToolbar />
      <EditToolbar />
      <MapView />
      <div className="flex h-[5px] items-center justify-center">
        <div className="h-[3px] w-[21px] bg-[repeating-linear-gradient(90deg,#777_0_1px,#ddd_1px_2px)]" />
      </div>
      <div className="grid h-[192px] grid-cols-[minmax(0,647fr)_5px_minmax(0,370fr)]">
        <ShapeList />
        <div className="flex items-center justify-center">
          <div className="h-[21px] w-[3px] bg-[repeating-linear-gradient(0deg,#777_0_1px,#ddd_1px_2px)]" />
        </div>
        <Properties />
      </div>
    </div>
  );
}
